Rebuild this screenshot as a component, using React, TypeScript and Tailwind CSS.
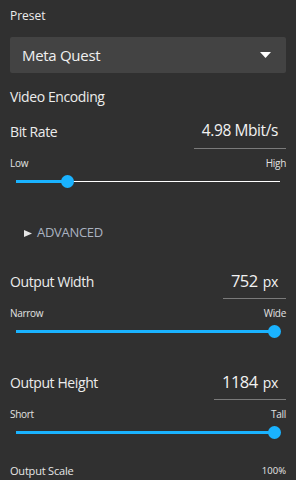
import { ReactNode } from 'react';

const font = { fontFamily: '"Open Sans", "Noto Sans", sans-serif' };

function ValueRow({ label, children }: { label: string; children: ReactNode }) {
  return (
    <div className="flex justify-between items-start">
      <div className="h-[26px] flex items-center text-[14px] tracking-[-0.4px] text-[#ececec]">{label}</div>
      <div className="h-[31px] border-b border-[#7a7a7a] px-[8px]">
        <div className="h-[26px] flex items-center justify-end text-[#f2f2f2]">{children}</div>
      </div>
    </div>
  );
}

function Slider({ min, max, value }: { min: string; max: string; value: number }) {
  return (
    <div>
      <div className="mt-[7px] h-[14px] flex items-center justify-between text-[10px] tracking-[-0.3px] text-[#e2e2e2]">
        <span>{min}</span>
        <span>{max}</span>
      </div>
      <div className="mt-[5px] h-[12px] px-[6px]">
        <div className="relative h-full">
          <div className="absolute left-0 right-0 top-[5.5px] h-px bg-white" />
          <div
            className="absolute left-0 top-[4.5px] h-[3px] bg-[#1ab3ff]"
            style={{ width: `calc(6px + (100% - 12px) * ${value})` }}
          />
          <div
            className="absolute top-[-0.5px] w-[13px] h-[13px] rounded-full bg-[#1ab3ff]"
            style={{ left: `calc((100% - 12px) * ${value} - 0.5px)` }}
          />
        </div>
      </div>
    </div>
  );
}

export default function App() {
  return (
    <div className="w-[296px] h-[480px] overflow-hidden bg-[#303030] px-[10px]" style={font}>
      <div className="pt-[6px] h-[26px] flex items-center text-[12px] text-[#ececec]">Preset</div>

      <div className="mt-[11px] h-[36px] rounded-[2px] bg-[#434343] flex items-center justify-between pl-[12px] pr-[15px]">
        <span className="text-[15px] tracking-[-0.3px] text-[#f0f0f0]">Meta Quest</span>
        <svg width="11" height="6" viewBox="0 0 11 6">
          <path d="M0 0 H11 L5.5 6 Z" fill="#ffffff" />
        </svg>
      </div>

      <div className="mt-[13px] h-[20px] flex items-center text-[14px] tracking-[-0.4px] text-[#ececec]">Video Encoding</div>

      <div className="mt-[12px]">
        <ValueRow label="Bit Rate">
          <span className="text-[15.5px] tracking-[-0.4px]">4.98 Mbit/s</span>
        </ValueRow>
        <Slider min="Low" max="High" value={0.18} />
      </div>

      <div className="mt-[38px] h-[16px] flex items-center pl-[14px] text-[#aab2c0]">
        <svg width="8" height="7" viewBox="0 0 8 7" className="mr-[5px]">
          <path d="M0 0 L8 3.5 L0 7 Z" fill="#e6e6e6" />
        </svg>
        <span className="text-[13px] tracking-[-0.3px]">ADVANCED</span>
      </div>

      <div className="mt-[27px]">
        <ValueRow label="Output Width">
          <span className="text-[16.5px] tracking-[-0.5px]">752</span>
          <span className="text-[14px] tracking-[-0.3px] ml-[5px]">px</span>
        </ValueRow>
        <Slider min="Narrow" max="Wide" value={1} />
      </div>

      <div className="mt-[32px]">
        <ValueRow label="Output Height">
          <span className="text-[16.5px] tracking-[-0.5px]">1184</span>
          <span className="text-[14px] tracking-[-0.3px] ml-[5px]">px</span>
        </ValueRow>
        <Slider min="Short" max="Tall" value={1} />
      </div>

      <div className="mt-[25px] h-[16px] flex items-center justify-between">
        <span className="text-[11px] tracking-[-0.2px] text-[#e6e6e6]">Output Scale</span>
        <span className="text-[9.5px] text-[#e6e6e6]">100%</span>
      </div>
    </div>
  );
}
